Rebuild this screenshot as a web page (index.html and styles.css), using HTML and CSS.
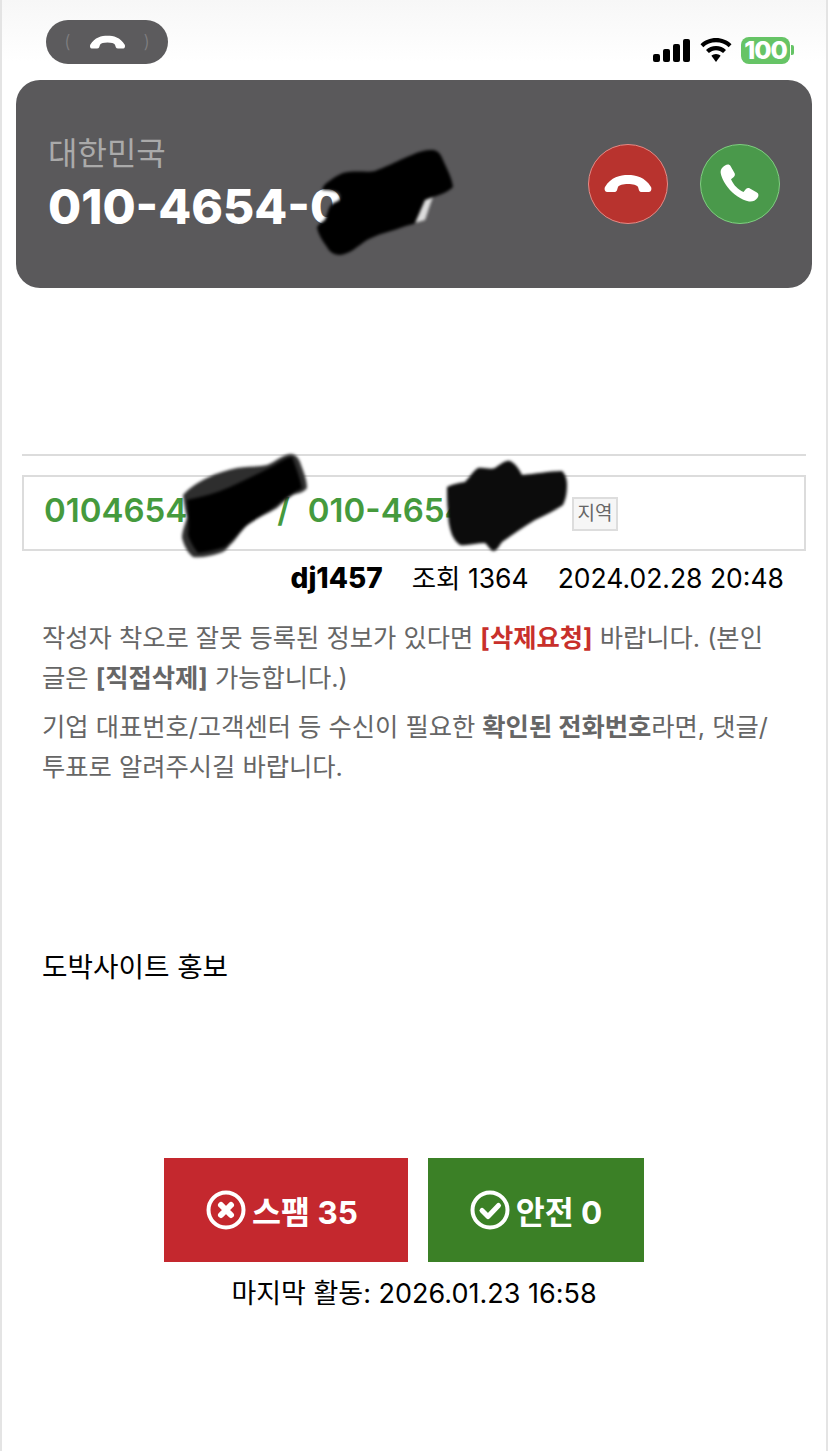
FILE: index.html
```html
<!DOCTYPE html>
<html lang="ko">
<head>
    <meta charset="utf-8">
    <title>010-4654</title>
    <link rel="stylesheet" href="styles.css">
</head>
<body>
    <div class="page">
        <div class="status">
            <div class="call-pill">
                <span class="paren">(</span>
                <svg class="pill-phone" viewBox="0 0 50 20"><path d="M2 13C8 3 17 1 25 1s17 2 23 12c1 2 0 5-2 5h-7c-3 0-3-2-4-5-1-2-5-3-10-3s-9 1-10 3c-1 3-1 5-4 5H4c-2 0-3-3-2-5z" fill="#fff"/></svg>
                <span class="paren">)</span>
            </div>
            <div class="status-icons">
                <svg class="signal" viewBox="0 0 37 23"><rect x="0" y="15" width="7" height="8" rx="2"/><rect x="10" y="10" width="7" height="13" rx="2"/><rect x="20" y="5" width="7" height="18" rx="2"/><rect x="30" y="0" width="7" height="23" rx="2"/></svg>
                <svg class="wifi" viewBox="0 0 32 24"><path d="M16 0c6 0 11.500 2.300 15.500 6.200l-2.800 3C25.400 6 21 4.200 16 4.200S6.600 6 3.300 9.200l-2.800-3C4.500 2.300 10 0 16 0z"/><path d="M16 8c3.900 0 7.400 1.500 10 4l-2.900 3c-1.900-1.700-4.400-2.800-7.100-2.800s-5.200 1.100-7.100 2.800L6 12c2.600-2.500 6.100-4 10-4z"/><path d="M16 16c1.800 0 3.400.7 4.600 1.800L16 24l-4.600-6.200C12.600 16.700 14.200 16 16 16z"/></svg>
                <div class="battery"><span class="battery-level">100</span><i class="battery-tip"></i></div>
            </div>
        </div>

        <div class="call-card">
            <div class="call-info">
                <div class="country">대한민국</div>
                <div class="call-number">010-4654-0</div>
            </div>
            <div class="call-buttons">
                <button class="round-btn decline">
                    <svg class="decline-icon" viewBox="0 0 50 20"><path d="M2 13C8 3 17 1 25 1s17 2 23 12c1 2 0 5-2 5h-7c-3 0-3-2-4-5-1-2-5-3-10-3s-9 1-10 3c-1 3-1 5-4 5H4c-2 0-3-3-2-5z" fill="#fff"/></svg>
                </button>
                <button class="round-btn accept">
                    <svg class="accept-icon" viewBox="0 0 40 40"><path d="M5 1.500c2-1.500 4.500-1.500 5.500.5l4 7c.8 1.500.4 3-1 4.200l-2.500 2c1.500 3.200 3.200 5.700 5.300 7.800 2 2 4.300 3.600 7.200 5l2.200-2.700c1.200-1.400 2.800-1.700 4.200-.9l7 4.200c2 1.200 2 3.500.5 5.400-2 2.600-5 4-8.400 3.500C22 36 13 30.500 7.500 23 3.500 17.500.8 12 .6 8 .5 5.300 2.500 3.200 5 1.500z" fill="#fff"/></svg>
                </button>
            </div>
            <svg class="scribble scribble-card" viewBox="0 0 170 125">
                <path d="M43 33C55 30 68 33 75 31 85 27 92 24 100 20 112 15 122 9 133 10 139 11 141 15 143 20 147 29 152 38 153 47 147 53 139 55 133 57 130 66 128 74 123 80 115 84 108 85 100 88 89 92 78 94 67 100 58 106 50 114 40 115 33 115 29 111 27 107 22 100 18 94 17 87 20 83 23 81 25 80 27 75 28 69 31 65 34 62 38 62 40 59 41 56 39 53 37 52 32 50 27 50 22 50 23 46 25 44 28 42 33 38 38 35 43 33z" fill="#000"/>
                <path d="M125 60L133 57 125 80 115 83z" fill="#ddd"/>
            </svg>
        </div>

        <div class="number-area">
            <hr class="divider">
            <div class="number-box">
                <span class="number-link">0104654</span>
                <span class="number-slash">/</span>
                <span class="number-link">010-4654</span>
                <span class="tag">지역</span>
                <svg class="scribble scribble-one" viewBox="0 0 150 120">
                    <path d="M13 50C20 42 29 37 37 33 47 28 57 25 67 23 77 21 87 22 97 20 105 17 112 10 120 9 125 9 128 12 130 17 133 26 137 34 137 43 133 48 128 48 123 50 117 54 112 58 107 63 97 69 87 73 77 80 70 87 66 95 60 100 56 105 54 107 50 108 41 111 32 113 23 112 17 107 14 100 12 93 12 86 15 80 17 73 15 65 14 57 13 50z" fill="#2e2e2e"/>
                    <path d="M17 55C32 52 46 48 60 42 75 35 90 28 105 20 111 16 116 13 122 12 126 22 130 33 132 43 123 48 115 53 107 60 96 68 85 74 75 82 68 89 62 96 55 102 46 105 37 107 28 108 23 102 20 96 18 90 19 78 18 66 17 55z" fill="#000"/>
                </svg>
                <svg class="scribble scribble-two" viewBox="0 0 190 105">
                    <path d="M12 32C18 29 24 28 30 27 35 22 38 16 43 13 49 12 55 15 60 13 65 10 70 5 75 6 80 8 84 14 87 20 100 19 114 16 127 16 131 20 132 25 132 30 132 37 131 44 128 50 119 56 110 60 100 65 89 72 78 79 67 87 64 91 62 96 58 96 55 95 53 90 50 88 42 88 33 91 25 90 21 87 19 84 17 80 14 72 13 64 13 57 12 48 12 40 12 32z" fill="#0c0c0c"/>
                </svg>
            </div>
            <div class="meta">
                <b class="meta-user">dj1457</b>
                <span>조회 1364</span>
                <span>2024.02.28 20:48</span>
            </div>
        </div>

        <div class="notice">
            <p>작성자 착오로 잘못 등록된 정보가 있다면 <b class="red">[삭제요청]</b> 바랍니다. (본인 글은 <b>[직접삭제]</b> 가능합니다.)</p>
            <p>기업 대표번호/고객센터 등 수신이 필요한 <b>확인된 전화번호</b>라면, 댓글/ 투표로 알려주시길 바랍니다.</p>
        </div>

        <div class="post-body">도박사이트 홍보</div>

        <div class="votes">
            <button class="vote spam">
                <svg class="vote-icon" viewBox="0 0 40 40"><circle cx="20" cy="20" r="17.500" fill="none" stroke="#fff" stroke-width="4"/><path d="M15 15l10 10M25 15L15 25" stroke="#fff" stroke-width="6" stroke-linecap="round"/></svg>
                <span>스팸 35</span>
            </button>
            <button class="vote safe">
                <svg class="vote-icon" viewBox="0 0 40 40"><circle cx="20" cy="20" r="17.500" fill="none" stroke="#fff" stroke-width="4"/><path d="M12 20.500l6 6 10.500-11" fill="none" stroke="#fff" stroke-width="5" stroke-linecap="round" stroke-linejoin="round"/></svg>
                <span>안전 0</span>
            </button>
        </div>
        <div class="last-active">마지막 활동: 2026.01.23 16:58</div>
    </div>
</body>
</html>
```

FILE: styles.css
```css
* {
    box-sizing: border-box;
}

html, body {
    margin: 0;
    padding: 0;
    background-color: #fff;
}

body {
    font-family: Inter, "Noto Sans CJK KR", sans-serif;
    color: #000;
}

.page {
    height: 1451px;
    overflow: hidden;
    border-left: 2px solid #e4e4e4;
    border-right: 2px solid #e4e4e4;
    background: linear-gradient(#f7f7f7, #fff 62px);
}

/* status bar */
.status {
    display: flex;
    justify-content: space-between;
    align-items: center;
    height: 80px;
    padding: 20px 32px 16px 44px;
}

.call-pill {
    display: flex;
    justify-content: center;
    align-items: center;
    gap: 17px;
    width: 122px;
    height: 44px;
    border-radius: 22px;
    background-color: #5c5b5d;
}

.paren {
    color: #807f81;
    font-size: 18px;
    font-weight: 300;
    line-height: 1;
}

.pill-phone {
    width: 39px;
    height: 15px;
}

.status-icons {
    display: flex;
    align-items: center;
    margin-top: 16px;
}

.signal {
    width: 37px;
    height: 23px;
    margin-right: 10px;
}

.wifi {
    width: 32px;
    height: 24px;
    margin-right: 9px;
}

.battery {
    display: flex;
    align-items: center;
}

.battery-level {
    width: 49px;
    height: 27px;
    border-radius: 8px;
    background-color: #66c466;
    color: #fff;
    font-size: 25px;
    font-weight: 800;
    line-height: 27px;
    text-align: center;
    letter-spacing: -1px;
}

.battery-tip {
    width: 3px;
    height: 10px;
    margin-left: 1px;
    border-radius: 0 2px 2px 0;
    background-color: #66c466;
}

/* incoming call card */
.call-card {
    position: relative;
    display: flex;
    justify-content: space-between;
    align-items: center;
    height: 208px;
    margin: 0 14px;
    padding: 0 32px;
    border-radius: 24px;
    background-color: #5a595b;
}

.call-info {
    padding-top: 5px;
}

.country {
    margin-top: -2px;
    color: #aaa;
    font-size: 32px;
    line-height: 36px;
}

.call-number {
    margin-top: 7px;
    color: #fff;
    font-size: 48px;
    font-weight: 800;
    line-height: 56px;
}

.call-buttons {
    display: flex;
    gap: 32px;
}

.round-btn {
    display: flex;
    justify-content: center;
    align-items: center;
    width: 80px;
    height: 80px;
    padding: 0;
    border-radius: 50%;
}

.decline {
    border: 1px solid #e58a85;
    background-color: #b8332e;
}

.accept {
    border: 1px solid #7fcf80;
    background-color: #4a994b;
}

.decline-icon {
    width: 50px;
    height: 20px;
}

.accept-icon {
    width: 40px;
    height: 40px;
}

.scribble {
    position: absolute;
    filter: blur(1.500px);
}

.scribble-card {
    left: 284px;
    top: 60px;
    width: 170px;
    height: 125px;
}

/* number box */
.number-area {
    margin: 166px 20px 0;
}

.divider {
    height: 2px;
    margin: 0 0 19px;
    border: 0;
    background-color: #dcdcdc;
}

.number-box {
    position: relative;
    display: flex;
    align-items: center;
    height: 76px;
    padding: 0 20px;
    border: 2px solid #dcdcdc;
}

.number-link {
    margin-bottom: 6px;
    color: #459a3d;
    font-size: 33px;
    font-weight: 600;
}

.number-slash {
    margin-bottom: 6px;
    margin-left: 90px;
    margin-right: 18px;
    color: #459a3d;
    font-size: 33px;
    font-weight: 600;
}

.tag {
    margin-left: 105px;
    margin-top: 2px;
    padding: 0 4px;
    border: 2px solid #ddd;
    background-color: #f6f6f6;
    color: #666;
    font-size: 19px;
    line-height: 30px;
}

.scribble-one {
    left: 146px;
    top: -32px;
    width: 150px;
    height: 120px;
}

.scribble-two {
    left: 411px;
    top: -22px;
    width: 190px;
    height: 105px;
}

.meta {
    display: flex;
    justify-content: flex-end;
    align-items: center;
    gap: 29px;
    padding-right: 22px;
    margin-top: 10px;
    font-size: 26.500px;
    line-height: 34px;
}

.meta-user {
    font-size: 28px;
    font-weight: 800;
}

/* notice */
.notice {
    margin: 23px 40px 0;
    color: #666;
    font-size: 25.300px;
    line-height: 40px;
    word-break: keep-all;
}

.notice p {
    margin: 0 0 9px;
}

.red {
    color: #c8302b;
}

.post-body {
    margin: 160px 40px 0;
    font-size: 27.700px;
    line-height: 40px;
}

/* vote buttons */
.votes {
    display: flex;
    justify-content: center;
    gap: 20px;
    margin-top: 171px;
    padding-right: 20px;
}

.vote {
    display: flex;
    justify-content: center;
    align-items: center;
    gap: 6px;
    height: 104px;
    padding: 0;
    border: 0;
    color: #fff;
    font-family: inherit;
    font-size: 31.500px;
    font-weight: 700;
}

.spam {
    width: 244px;
    padding-right: 8px;
    background-color: #c4282e;
}

.safe {
    width: 216px;
    background-color: #3b8026;
}

.vote-icon {
    width: 40px;
    height: 40px;
}

.last-active {
    margin-top: 12px;
    font-size: 27px;
    line-height: 40px;
    text-align: center;
}
```
